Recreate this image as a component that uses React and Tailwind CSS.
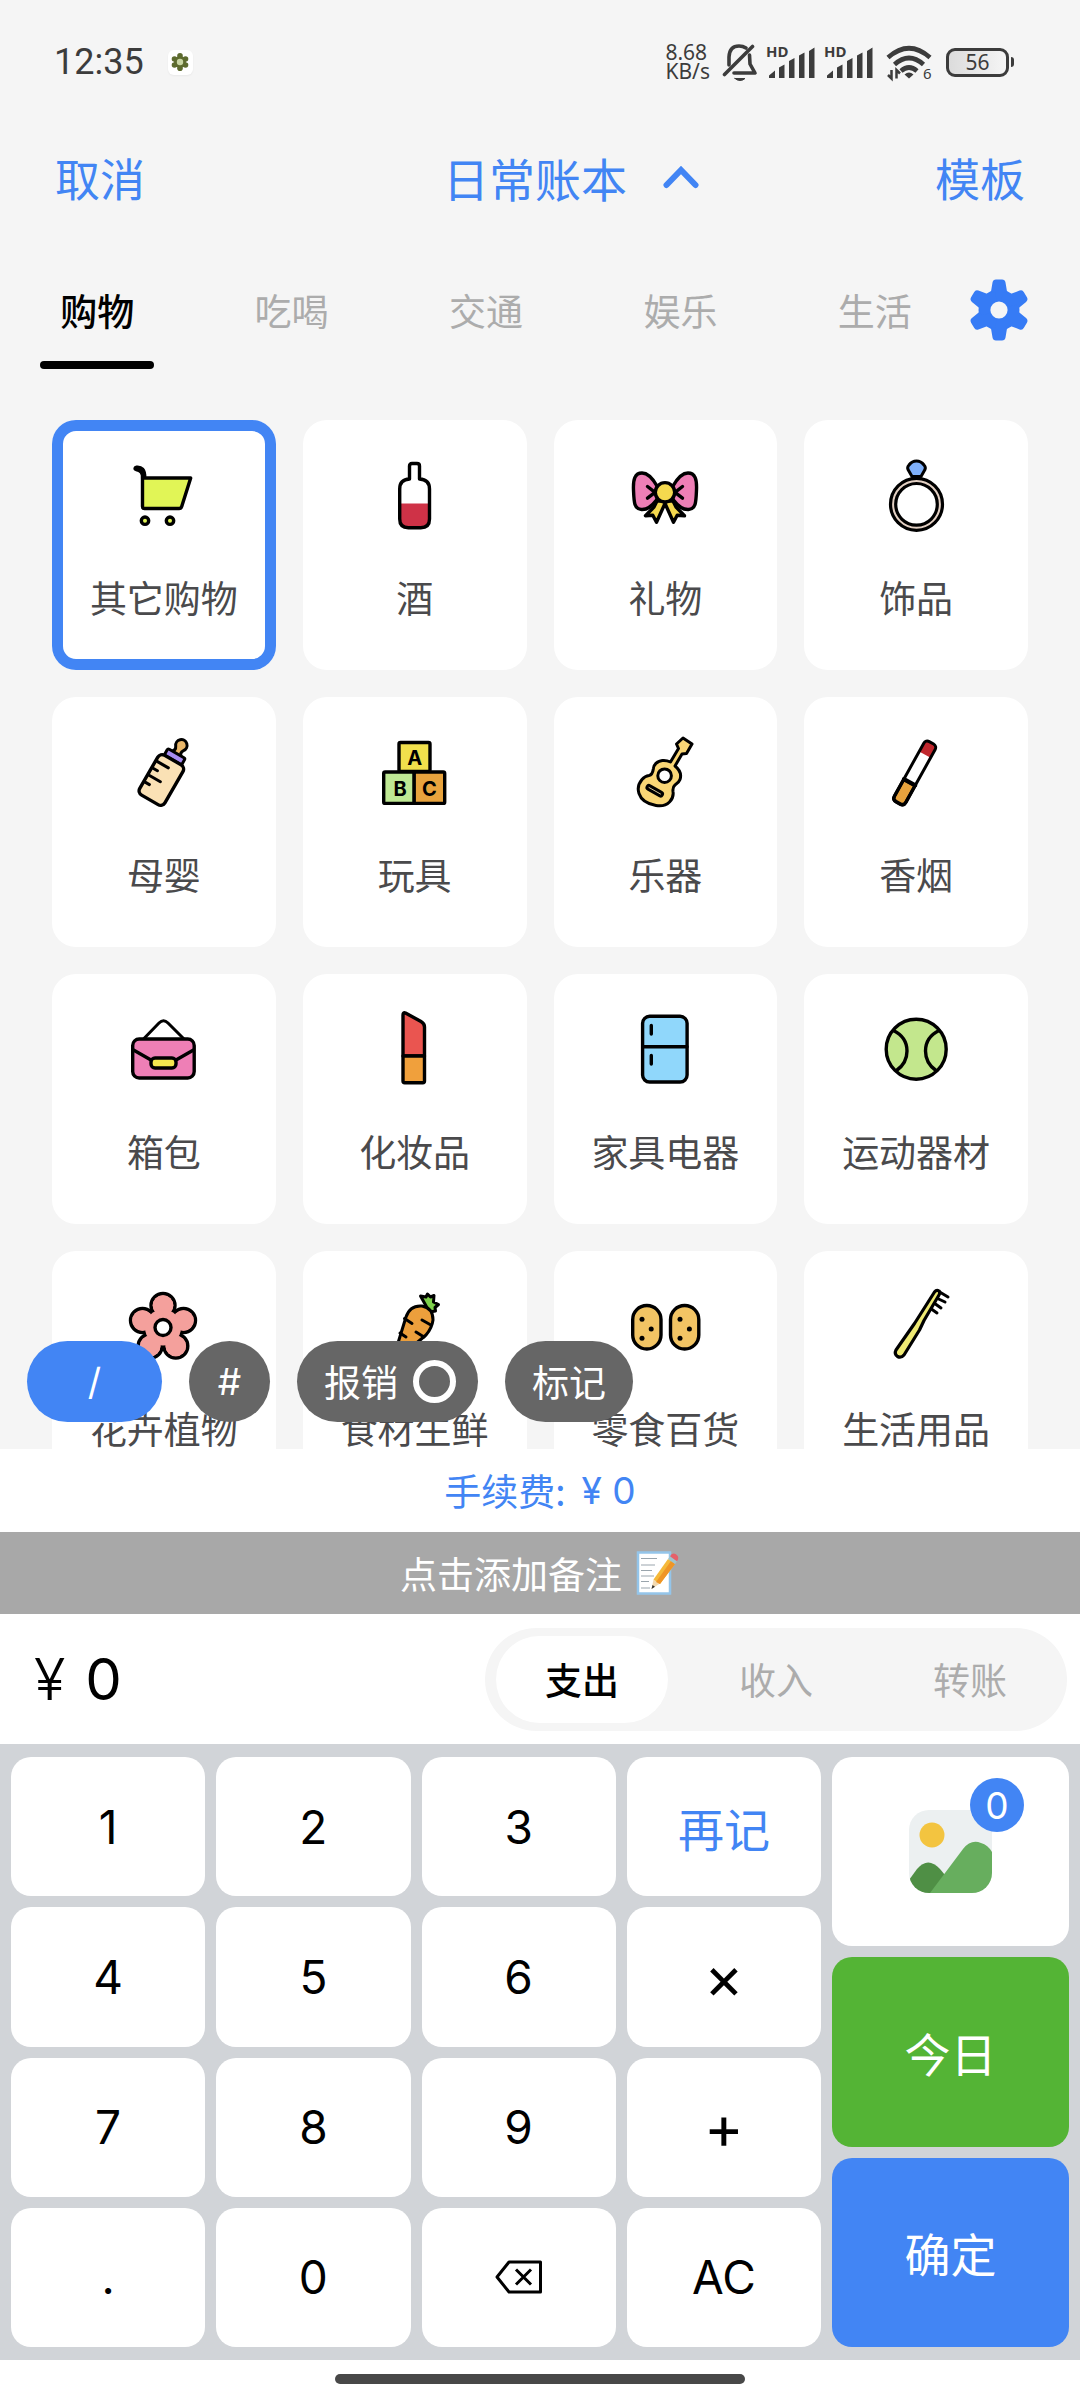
import React, { useState } from "react";
import clsx from "clsx";

// ── Data ────────────────────────────────────────────────────────────────────
const TABS = ["购物", "吃喝", "交通", "娱乐", "生活"];
const TYPES = ["支出", "收入", "转账"];
const KEYS = ["1", "2", "3", "再记", "4", "5", "6", "×", "7", "8", "9", "+", ".", "0", "⌫", "AC"];

const CATEGORIES = [
  { name: "其它购物", icon: CartIcon },
  { name: "酒", icon: WineIcon },
  { name: "礼物", icon: BowIcon },
  { name: "饰品", icon: RingIcon },
  { name: "母婴", icon: BabyBottleIcon },
  { name: "玩具", icon: BlocksIcon },
  { name: "乐器", icon: GuitarIcon },
  { name: "香烟", icon: CigaretteIcon },
  { name: "箱包", icon: BagIcon },
  { name: "化妆品", icon: LipstickIcon },
  { name: "家具电器", icon: FridgeIcon },
  { name: "运动器材", icon: TennisIcon },
  { name: "花卉植物", icon: FlowerIcon },
  { name: "食材生鲜", icon: CarrotIcon },
  { name: "零食百货", icon: PotatoIcon },
  { name: "生活用品", icon: ToothbrushIcon },
];

// ── Category icons, all on an 80 x 80 box ───────────────────────────────────
function Icon({ children }) {
  return (
    <svg
      viewBox="0 0 80 80"
      className="size-20"
      fill="none"
      stroke="#000"
      strokeWidth="3.4"
      strokeLinecap="round"
      strokeLinejoin="round"
      aria-hidden="true"
    >
      {children}
    </svg>
  );
}

function CartIcon() {
  return (
    <Icon>
      <path d="M18.5 23c.5-5-2-8-6.500-8.500-1.500-.5-1-2 .5-2.200 5-.5 8.500 2 8.200 10.700" fill="#a5b33c" />
      <path d="M18.500 23h48.200l-9 28.500q-.6 2-2.500 2H20.500q-2 0-2-2z" fill="#e1f556" />
      <circle cx="21" cy="65.700" r="3.700" fill="#e1f556" />
      <circle cx="46" cy="65.700" r="3.700" fill="#e1f556" />
    </Icon>
  );
}

function WineIcon() {
  return (
    <Icon>
      <path d="M26 48.500h28v17q0 7-7 7h-14q-7 0-7-7z" fill="#cf3247" stroke="none" />
      <path d="M34.500 24V11q0-2.500 2.500-2.500h5q2.500 0 2.500 2.500v13q10 .5 10 10v30q0 8.700-8.700 8.700H33.400q-8.700 0-8.700-8.700V34q0-9.500 9.800-10z" />
    </Icon>
  );
}

function BowIcon() {
  return (
    <Icon>
      <path d="M32 31c-4-7-9-13-15-13-7 0-9 6-8.500 17 .5 12 .5 19 8 19.500 6 .3 10-3 15.500-10z" fill="#ee7fb6" />
      <path d="M48 31c4-7 9-13 15-13 7 0 9 6 8.500 17-.5 12-.5 19-8 19.500-6 .3-10-3-15.500-10z" fill="#ee7fb6" />
      <path d="M32 46l-3 6-8.500 8.800 7.300-.6 3.700 7L40 48.500l8.500 18.700 3.700-7 7.300.6L51 52l-3-6z" fill="#f5d94e" />
      <path d="M22.500 31.500l7.500 5.800-7.500 5.800M57.500 31.500l-7.500 5.800 7.500 5.800" />
      <circle cx="40" cy="37.300" r="9.700" fill="#f5d94e" />
    </Icon>
  );
}

function RingIcon() {
  return (
    <Icon>
      <circle cx="40.500" cy="49.300" r="23.500" stroke="#e3d0c3" strokeWidth="4" />
      <circle cx="40.500" cy="49.300" r="26" strokeWidth="3.200" />
      <circle cx="40.500" cy="49.300" r="20.800" strokeWidth="3.200" />
      <path d="M36 21.500l-4-7q-1-2.500 1-4.500 3-4 7.500-4t7.500 4q2 2 1 4.500l-4 7z" fill="#7fb0fa" strokeWidth="3" />
    </Icon>
  );
}

function BabyBottleIcon() {
  return (
    <Icon>
      <g transform="rotate(30 37.5 47.7)">
        <path d="M32 18q3.500-3 1-6.500a5.700 5.700 0 1 1 9 0Q39.500 15 43 18z" fill="#e9b76a" strokeWidth="3" />
        <rect x="27.500" y="17.500" width="20" height="7.500" rx="1.500" fill="#a78bf0" strokeWidth="3" />
        <rect x="23" y="25" width="29" height="46" rx="5" fill="#fae1b5" />
        <path d="M23.500 34h14M23.500 42h6M23.500 50h14M23.500 58h6" strokeWidth="3" />
      </g>
    </Icon>
  );
}

function BlocksIcon() {
  return (
    <Icon>
      <rect x="24" y="10.500" width="31" height="29" rx="1.500" fill="#f1e04c" />
      <rect x="8.700" y="40" width="30.500" height="31.400" rx="1.500" fill="#bfe894" />
      <rect x="39.200" y="40" width="30.500" height="31.400" rx="1.500" fill="#e8a33d" />
      <g fill="#000" stroke="none" textAnchor="middle" className="font-['Inter',sans-serif] text-[20px] font-bold">
        <text x="39.700" y="33">A</text>
        <text x="25" y="63.500">B</text>
        <text x="54.500" y="63.500">C</text>
      </g>
    </Icon>
  );
}

function GuitarIcon() {
  return (
    <Icon>
      <path
        d="M45.500 30l8-13.500-2-4.500L58 6l9 6-5.500 9.500-4.500.5-7 12q7.500 6 5 13.500-1 3-5 5.500-2.500 2-2 6.500 1 6-3.500 10.500-5 5-13.500 3.500Q17 71 14 61.500 11.500 54 17 47.500q3-3.500 7-4 3.500-.7 4.300-6.500.7-7 9-8.500 4-.5 8.200 1.500z"
        fill="#f9d676"
        strokeWidth="3"
      />
      <circle cx="39.600" cy="43.700" r="6.800" fill="#fff" strokeWidth="3" />
      <path d="M24 55.500l11.500 6.500" strokeWidth="7" />
      <path d="M24 55.500l11.500 6.500" stroke="#d8c79a" strokeWidth="1" />
    </Icon>
  );
}

function CigaretteIcon() {
  return (
    <Icon>
      <g transform="rotate(29 38.7 41)">
        <rect x="32.200" y="6.500" width="13" height="69" rx="4" fill="#fff" stroke="none" />
        <path d="M32.200 20v-9q0-4 4-4h5q4 0 4 4v9z" fill="#c0272d" stroke="none" />
        <path d="M32.200 52h13v19q0 4-4 4h-5q-4 0-4-4z" fill="#e8a33d" />
        <path d="M32.200 51.500h13" strokeWidth="4" />
        <rect x="32.200" y="6.500" width="13" height="69" rx="4" strokeWidth="3" />
      </g>
    </Icon>
  );
}

function BagIcon() {
  return (
    <Icon>
      <path d="M20 29.500l15-15.500q4.500-4.500 9 0L59.500 29.500" strokeWidth="3" />
      <rect x="8.700" y="30" width="61.500" height="39" rx="6.500" fill="#ee7fb6" />
      <path d="M9.500 41l17.500 10M69.500 41L52 51" />
      <rect x="27" y="49" width="25" height="10" rx="4" fill="#f5e74e" />
    </Icon>
  );
}

function LipstickIcon() {
  return (
    <Icon>
      <path d="M28 47V6q0-3 2.500-2l15.500 8.500q3.500 2 3.500 5.500v29z" fill="#ea5550" />
      <path d="M28 47h21.500v25q0 1.700-1.700 1.700H29.700q-1.700 0-1.700-1.700z" fill="#f0a03c" />
    </Icon>
  );
}

function FridgeIcon() {
  return (
    <Icon>
      <rect x="17.600" y="7.300" width="44.500" height="65.700" rx="7" fill="#90d7fb" />
      <path d="M18 37.700h44M26.300 16.500v8.500M26.300 46.500v8.500" />
    </Icon>
  );
}

function TennisIcon() {
  return (
    <Icon>
      <circle cx="40.200" cy="40.200" r="30" fill="#c3e78d" />
      <path d="M17.500 21.500c7 3.500 13.500 10 13.500 20.500 0 8-4 15-10.500 19.500M63 21.500c-7 3.500-13.500 10-13.500 20.500 0 8 4 15 10.500 19.500" />
    </Icon>
  );
}

function FlowerIcon() {
  return (
    <Icon>
      <g fill="#f4a09c">
        <circle cx="39" cy="19.500" r="12" />
        <circle cx="18.500" cy="34.500" r="12" />
        <circle cx="59.500" cy="34.500" r="12" />
        <circle cx="26.200" cy="60" r="12" />
        <circle cx="51.800" cy="60" r="12" />
      </g>
      <g fill="#f4a09c" stroke="none">
        <circle cx="39" cy="19.500" r="10.300" />
        <circle cx="18.500" cy="34.500" r="10.300" />
        <circle cx="59.500" cy="34.500" r="10.300" />
        <circle cx="26.200" cy="60" r="10.300" />
        <circle cx="51.800" cy="60" r="10.300" />
        <circle cx="39" cy="41.500" r="18" />
      </g>
      <circle cx="39" cy="41.500" r="8" fill="#fff" />
    </Icon>
  );
}

function CarrotIcon() {
  return (
    <Icon>
      <path d="M50 18l-4.500-8 5.500 1 1.500-3 3 3 3.500-1.500-.5 6.500 5 2.500-3.500 3 .5 3.500-6 1z" fill="#7ed04b" strokeWidth="3" />
      <path d="M31 31Q35 19 47 20q11 2 11 14-1 8-7 15L24 72q-5 3-5-2z" fill="#ec9f3c" strokeWidth="3" />
      <path d="M29.500 32.500l7.500 5M47 34l8 4.500M41 46l8 5M25 47l6 4" strokeWidth="3" />
    </Icon>
  );
}

function PotatoIcon() {
  return (
    <Icon>
      <rect x="7.700" y="19.500" width="28.300" height="43.500" rx="14" fill="#f2c464" />
      <rect x="45.500" y="19.500" width="28.300" height="43.500" rx="14" fill="#f2c464" />
      <g fill="#000" stroke="none">
        <circle cx="17" cy="33.300" r="2.500" />
        <circle cx="26.200" cy="43" r="2.500" />
        <circle cx="17" cy="52.300" r="2.500" />
        <circle cx="55" cy="33.300" r="2.500" />
        <circle cx="64.400" cy="43" r="2.500" />
        <circle cx="55" cy="52.300" r="2.500" />
      </g>
    </Icon>
  );
}

function ToothbrushIcon() {
  return (
    <Icon>
      <path d="M62 5l10 6M60.500 12l8.500 4M58 17l7 5M54 22l7 5" strokeWidth="3" />
      <path d="M58.500 6q2-2.500 4.500-1 1.500 1.500 0 4L48 34.500 43.500 44 28 69q-3 3.500-6.500 1.500-3.500-2.500-1.500-6.500L38.500 37.500z" fill="#eee973" strokeWidth="3.200" />
    </Icon>
  );
}

// ── Toolbar icons ───────────────────────────────────────────────────────────
function GearIcon() {
  const tooth = "M32 4.500h6q3 0 3.500 3l1.500 9 5.500 6L35 35 21.500 22.500l5.500-6 1.500-9q.5-3 3.500-3z";
  return (
    <svg viewBox="0 0 70 70" className="size-[70px]" fill="#367bf5" aria-hidden="true">
      <circle cx="35" cy="35" r="20.500" />
      {[0, 60, 120, 180, 240, 300].map((a) => (
        <path key={a} d={tooth} transform={`rotate(${a} 35 35)`} />
      ))}
      <circle cx="35" cy="35" r="8.600" fill="#f5f5f5" />
    </svg>
  );
}

function BackspaceIcon() {
  return (
    <svg viewBox="0 0 50 36" className="h-9 w-[50px]" fill="none" stroke="#000" strokeWidth="3" strokeLinejoin="round" aria-hidden="true">
      <path d="M15 3h31.500v30H15L3 18z" />
      <path d="M22 10.500l15 15M37 10.500l-15 15" />
    </svg>
  );
}

function PhotoIcon() {
  return (
    <svg viewBox="0 0 83 83" className="size-[83px]" aria-hidden="true">
      <clipPath id="photo">
        <rect width="83" height="83" rx="20" />
      </clipPath>
      <g clipPath="url(#photo)">
        <rect width="83" height="83" fill="#ecf0f1" />
        <circle cx="23" cy="25" r="12.500" fill="#f3c440" />
        <path d="M0 70L8 59q11-13 23 0l10 12-10 14H0z" fill="#4f8f45" />
        <path d="M21 83L54 39q8-10 18-6 7 2 11 9v41z" fill="#67ae5e" />
      </g>
    </svg>
  );
}

function MemoIcon() {
  return (
    <svg viewBox="0 0 44 44" className="size-11" aria-hidden="true">
      <rect x="2" y="1.500" width="32" height="41" fill="#fff" stroke="#94c5ea" strokeWidth="2.500" />
      <path d="M5 7.500h16M5 14h14M5 19.500h11M5 25h13M5 30.500h8M5 37h9" stroke="#9aa5ad" strokeWidth="1" />
      <path d="M15.500 38l2-9.500 6.500 4z" fill="#f3d9b0" />
      <path d="M15.500 38l1-4 2.500 1.800z" fill="#333" />
      <path d="M17.500 28.500L32 8l7 5-15 20z" fill="#f5b93a" />
      <path d="M20 31L35 10l4 3-15 20z" fill="#ef9526" />
      <path d="M32 8l2-2.800 7 5L39 13z" fill="#9fc4cc" />
      <path d="M34 5.200q2-4 6-2 4 2.500 1 7z" fill="#e5616a" />
    </svg>
  );
}

// ── Status bar ──────────────────────────────────────────────────────────────
function Signal() {
  return (
    <svg viewBox="0 0 50 36" className="h-9 w-[50px] overflow-visible" fill="#3c3c3c" aria-hidden="true">
      <text x="0" y="13" className="font-['Noto_Sans',sans-serif] text-[15px] font-bold">HD</text>
      <path d="M3 34v-2.500l6-5V34zM13 34V23.500l5.500-3V34zM23 34V17l5.500-3v20zM33 34V11.500l5.500-3V34zM43 34V7l5.500-3.500V34z" />
    </svg>
  );
}

function StatusBar() {
  return (
    <div className="flex h-[124px] shrink-0 items-center justify-between pr-[66px] pl-[54px] text-[#3c3c3c]">
      <div className="flex items-center gap-6">
        <span className="font-['Roboto',sans-serif] text-[36px] leading-10">12:35</span>
        <span className="flex size-[25px] items-center justify-center rounded-md bg-white shadow-xs">
          <svg viewBox="0 0 20 20" className="size-5" fill="#5d6b2f" aria-hidden="true">
            <circle cx="10" cy="3.800" r="2.800" />
            <circle cx="15.500" cy="7" r="2.800" />
            <circle cx="15.500" cy="13" r="2.800" />
            <circle cx="10" cy="16.200" r="2.800" />
            <circle cx="4.500" cy="13" r="2.800" />
            <circle cx="4.500" cy="7" r="2.800" />
            <circle cx="10" cy="10" r="6" />
            <circle cx="10" cy="10" r="3.200" fill="#c9d6a4" />
          </svg>
        </span>
      </div>

      <div className="flex items-center gap-2">
        <span className="mr-1 font-['Noto_Sans',sans-serif] text-[21px] leading-[19px]">
          8.68
          <br />
          KB/s
        </span>
        <svg viewBox="0 0 36 38" className="h-[38px] w-9" fill="none" stroke="#3c3c3c" strokeWidth="3.600" strokeLinecap="round" strokeLinejoin="round" aria-hidden="true">
          <path d="M7 22v-8Q7.500 3 17 3q4 0 7 2M27.500 12l.5 9 5 9H12" />
          <path d="M2.500 31.500L30.500 3.500" />
          <path d="M13 35.500h10q-2 2-5 2t-5-2z" strokeWidth="1" fill="#3c3c3c" />
        </svg>
        <Signal />
        <Signal />
        <svg viewBox="0 0 48 36" className="ml-1 h-9 w-12 overflow-visible" fill="none" stroke="#3c3c3c" strokeWidth="4.600" aria-hidden="true">
          <path d="M2 13.500Q23 -5 44 13.500M8.500 20.500q14.500-13 29 0M15 27q8-7 16 0" />
          <path d="M23 34.500l-4.500-4q4.500-4 9 0z" fill="#3c3c3c" stroke="none" />
          <path d="M5.500 26v8.500L2 31M10.500 34.500V26l3.500 3.500" strokeWidth="2.500" />
          <text x="37" y="35" fill="#3c3c3c" stroke="none" className="font-['Noto_Sans',sans-serif] text-[15px]">6</text>
        </svg>
        <span className="ml-1 flex items-center gap-0.5">
          <span className="flex h-[29px] w-[63px] items-center justify-center rounded-[9px] border-[3px] border-[#3c3c3c] bg-linear-to-r from-[#dcdcdc] to-[#f5f5f5] font-['Noto_Sans',sans-serif] text-[21px] leading-6">
            56
          </span>
          <span className="h-2.5 w-[3px] rounded-r-full bg-[#3c3c3c]" />
        </span>
      </div>
    </div>
  );
}

// ── Keypad ──────────────────────────────────────────────────────────────────
function KeyButton({ label }) {
  return (
    <button
      aria-label={label === "⌫" ? "退格" : undefined}
      className={clsx(
        "flex items-center justify-center rounded-[20px] bg-white",
        label === "再记" ? "text-[46px] text-[#4285f4]" : "font-['Inter',sans-serif]",
        label === "×" || label === "+" ? "text-[60px]" : label !== "再记" && "text-[46px]"
      )}
    >
      {label === "⌫" ? <BackspaceIcon /> : label}
    </button>
  );
}

function Keypad() {
  return (
    <div className="flex h-[616px] gap-[11px] bg-[#d1d4d8] px-[11px] py-[13px]">
      <div className="grid flex-1 grid-cols-4 grid-rows-4 gap-[11px]">
        {KEYS.map((k) => (
          <KeyButton key={k} label={k} />
        ))}
      </div>
      <div className="grid w-[237px] grid-rows-3 gap-[11px] text-[46px] text-white">
        <button className="flex items-center justify-center rounded-[20px] bg-white" aria-label="图片">
          <span className="relative">
            <PhotoIcon />
            <span className="absolute -top-8 -right-8 flex size-[54px] items-center justify-center rounded-full bg-[#4285f4] font-['Inter',sans-serif] text-[37px] leading-none">
              0
            </span>
          </span>
        </button>
        <button className="rounded-[20px] bg-[#54b435]">今日</button>
        <button className="rounded-[20px] bg-[#4285f4]">确定</button>
      </div>
    </div>
  );
}

export default function App() {
  const [tab, setTab] = useState("购物");
  const [category, setCategory] = useState("其它购物");
  const [type, setType] = useState("支出");

  return (
    <div className="flex h-screen flex-col overflow-hidden bg-[#f5f5f5] font-['Noto_Sans_CJK_SC',sans-serif] text-[37px] leading-none text-black">
      <StatusBar />

      <header className="grid h-[106px] shrink-0 grid-cols-[1fr_auto_1fr] items-center px-[55px] text-[45px] text-[#4285f4]">
        <button className="justify-self-start">取消</button>
        <button className="flex items-center gap-9 pl-[62px] text-[46px]">
          日常账本
          <svg viewBox="0 0 36 24" className="h-6 w-9" fill="none" stroke="currentColor" strokeWidth="6" strokeLinecap="round" aria-hidden="true">
            <path d="M3.500 20L18 5l14.500 15" />
          </svg>
        </button>
        <button className="justify-self-end">模板</button>
      </header>

      <nav className="flex h-[160px] shrink-0 items-center pr-[46px]">
        <div className="flex h-full flex-1" role="tablist">
          {TABS.map((t) => (
            <button
              key={t}
              role="tab"
              aria-selected={t === tab}
              onClick={() => setTab(t)}
              className={clsx("relative flex-1", t === tab ? "font-medium text-black" : "text-[#acacac]")}
            >
              {t}
              {t === tab && <span className="absolute inset-x-10 bottom-[21px] h-2 rounded-full bg-black" />}
            </button>
          ))}
        </div>
        <button aria-label="设置" className="-ml-2 shrink-0">
          <GearIcon />
        </button>
      </nav>

      {/* Category grid, with the quick actions floating over its lower edge */}
      <main className="relative min-h-0 flex-1 overflow-hidden">
        <div className="grid grid-cols-4 gap-[27px] px-[52px] pt-[30px]">
          {CATEGORIES.map(({ name, icon: CategoryIcon }) => (
            <button
              key={name}
              onClick={() => setCategory(name)}
              className={clsx(
                "flex h-[250px] flex-col items-center gap-11 rounded-3xl bg-white pt-[35px] whitespace-nowrap text-[#4a4a4c]",
                name === category && "inset-ring-[11px] inset-ring-[#4285f4]"
              )}
            >
              <CategoryIcon />
              {name}
            </button>
          ))}
        </div>

        <div className="absolute bottom-[27px] left-[27px] flex h-[81px] gap-[27px] text-white">
          <button className="w-[135px] rounded-full bg-[#4285f4] font-['Inter',sans-serif]">/</button>
          <button className="w-[81px] rounded-full bg-[#666] font-['Inter',sans-serif]">#</button>
          <label className="flex items-center gap-[15px] rounded-full bg-[#666] pr-[22px] pl-[27px]">
            报销
            <input type="checkbox" className="size-[43px] appearance-none rounded-full border-[6px] border-white checked:bg-white" />
          </label>
          <button className="rounded-full bg-[#666] px-[27px]">标记</button>
        </div>
      </main>

      <footer className="shrink-0 bg-white">
        <button className="flex h-[83px] w-full items-center justify-center text-[#4285f4]">
          手续费:<span className="ml-4 font-['Inter',sans-serif]">¥ 0</span>
        </button>
        <button className="flex h-[82px] w-full items-center justify-center gap-3.5 bg-[#a8a8a8] text-white">
          点击添加备注
          <MemoIcon />
        </button>

        <div className="flex h-[130px] items-center justify-between pr-[13px] pl-[34px]">
          <output className="flex gap-5 font-['Inter',sans-serif] text-[58px]">
            <span className="font-light">¥</span>
            <span>0</span>
          </output>
          <div className="flex h-[103px] w-[582px] items-center rounded-full bg-[#f5f5f5] py-2">
            {TYPES.map((t) => (
              <button
                key={t}
                aria-pressed={t === type}
                onClick={() => setType(t)}
                className={clsx(
                  "mx-[11px] h-full flex-1 rounded-full",
                  t === type ? "bg-white font-medium text-black" : "text-[#acacac]"
                )}
              >
                {t}
              </button>
            ))}
          </div>
        </div>

        <Keypad />

        <div className="flex h-[43px] justify-center pt-3.5">
          <span className="h-2.5 w-[38%] rounded-full bg-[#484848]" />
        </div>
      </footer>
    </div>
  );
}
